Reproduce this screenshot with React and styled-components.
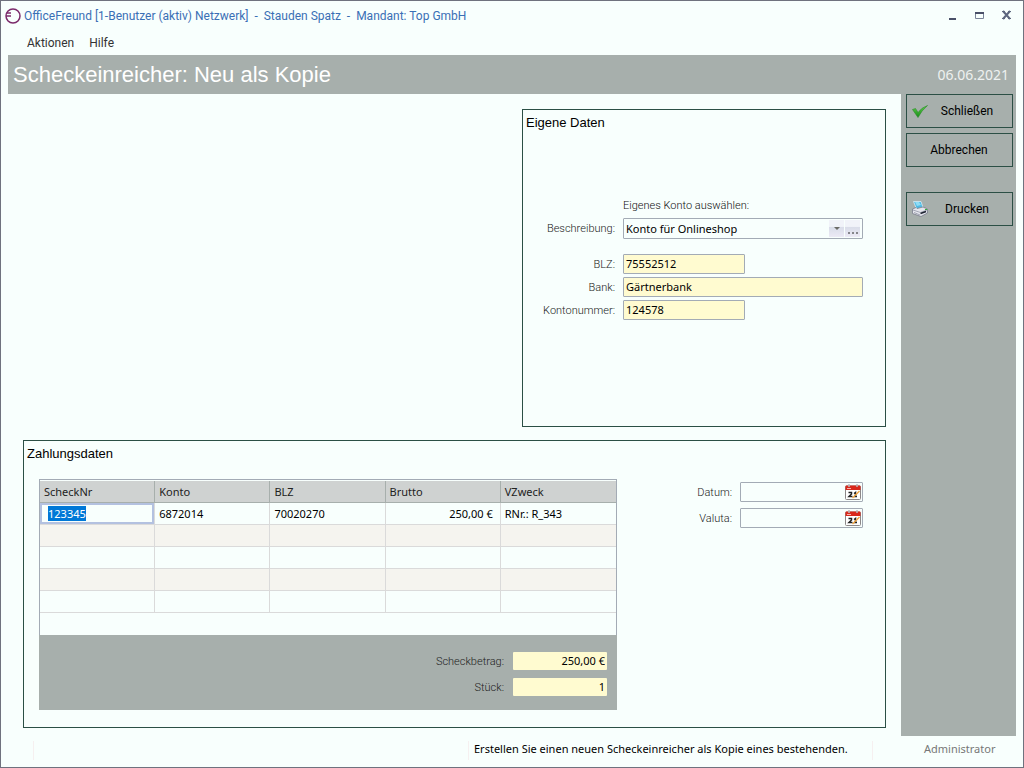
import React, { useEffect, useRef, useState } from "react";
import styled, { createGlobalStyle } from "styled-components";

const ui = `"Noto Sans", sans-serif`;
const plain = `"Liberation Sans", Arial, sans-serif`;
const light = `Roboto, sans-serif`;

const paper = "#f8fffd";
const grey = "#a7afac";
const green = "#2b4f45";
const line = "#a3abb5";
const yellow = "#fffbd0";

const GlobalStyle = createGlobalStyle`
  * {
    box-sizing: border-box;
  }

  body {
    margin: 0;
    background: ${paper};
    color: #000;
    font: 11px/16px ${ui};
  }

  button,
  input,
  select {
    margin: 0;
    font: inherit;
    color: inherit;
  }
`;

const Window = styled.div`
  display: flex;
  flex-direction: column;
  min-height: 100vh;
  border: 1px solid #6f727e;
`;

const TitleBar = styled.header`
  display: flex;
  align-items: center;
  height: 30px;
  padding: 0 9px 0 4px;
`;

const Title = styled.h1`
  flex: 1;
  margin: 0 0 0 3px;
  font: 400 12px/16px ${light};
  white-space: pre;
  color: #3a6fb5;
`;

const WindowButton = styled.button`
  display: flex;
  width: 15px;
  height: 16px;
  margin-left: 12px;
  padding: 2px;
  border: 0;
  background: none;
`;

const MenuBar = styled.nav`
  display: flex;
  gap: 15px;
  height: 24px;
  padding: 3px 26px;
`;

const MenuItem = styled.button`
  padding: 0;
  border: 0;
  background: none;
  font: 400 12px/18px ${light};
  color: #333;
`;

const Banner = styled.div`
  display: flex;
  align-items: center;
  justify-content: space-between;
  height: 39px;
  margin: 0 7px;
  padding: 0 7px 0 5px;
  background: ${grey};
  color: #fff;
`;

const Heading = styled.h2`
  margin: 0;
  font: 400 22px/24px ${plain};
`;

const Today = styled.span`
  font-size: 14px;
  color: #eef1f0;
`;

const Body = styled.div`
  display: flex;
  flex: 1;
  margin: 0 7px;
`;

const Main = styled.main`
  display: flex;
  flex: 1;
  flex-direction: column;
  gap: 13px;
  padding: 15px 15px 8px;
`;

const AccountRow = styled.div`
  display: grid;
  flex: 1;
  grid-template-columns: 499fr 364fr;
`;

const Panel = styled.section`
  grid-column: -2;
  padding: 4px 3px;
  border: 1px solid ${green};
`;

const PanelTitle = styled.h3`
  margin: 0;
  font: 400 13px/18px ${plain};
`;

const AccountForm = styled.form`
  display: grid;
  grid-template-columns: 1fr 240px;
  gap: 3px 8px;
  padding: 65px 19px 0 0;
`;

const Label = styled.label`
  font: 300 11px/22px ${light};
  height: 20px;
  text-align: right;
  color: #222;
`;

const Hint = styled.p`
  grid-column: 2;
  margin: 0;
  font: 300 11px/18px ${light};
  color: #111;
`;

const Field = styled.input`
  width: ${p => p.$width || "100%"};
  height: 20px;
  padding: 0 2px 2px;
  border: 1px solid ${line};
  border-radius: 1px;
  background: ${yellow};
`;

const Picker = styled.div`
  display: flex;
  height: 21px;
  margin-bottom: 12px;
  padding: 1px 2px 1px 1px;
  gap: 1px;
  border: 1px solid ${line};
  border-radius: 1px;
`;

const PickerSelect = styled.select`
  flex: 1;
  padding: 0 1px;
  border: 0;
  appearance: none;
  background: none;
`;

const PickerButton = styled.button`
  display: flex;
  width: 15px;
  padding: 0;
  border: 0;
  background: linear-gradient(#f1f3f9 0 38%, #d9dde9 42%, #eceaf5);
`;

const PaymentRow = styled.div`
  display: grid;
  grid-template-columns: 578fr 246fr;
  padding: 16px 19px 13px 12px;
`;

const Sheet = styled.div`
  border: 1px solid ${line};
  border-bottom: 0;
  padding-top: 1px;
`;

const Table = styled.table`
  width: 100%;
  margin-bottom: 22px;
  border-collapse: separate;
  border-spacing: 0;
  table-layout: fixed;
`;

const HeadCell = styled.th`
  height: 22px;
  padding: 0 4px;
  border-right: 1px solid ${grey};
  border-bottom: 1px solid ${grey};
  background: #cfd2d1;
  font-weight: 400;
  text-align: left;
  color: #222;

  &:last-child {
    border-right: 0;
  }
`;

const Row = styled.tr`
  &:nth-child(even) {
    background: #f5f4ef;
  }
`;

const Cell = styled.td`
  height: 22px;
  padding: ${p => (p.$editing ? "0" : p.$right ? "0 7px" : "0 4px")};
  border-right: 1px solid #dadada;
  border-bottom: 1px solid #dadada;
  text-align: ${p => (p.$right ? "right" : "left")};

  &:last-child {
    border-right: 0;
  }
`;

const CellInput = styled.input`
  display: block;
  width: 100%;
  height: 21px;
  padding: 0 6px;
  border: 2px solid #b3c1e0;
  outline: 0;
  background: ${paper};

  &::selection {
    background: #0078d7;
    color: #fff;
  }
`;

const Summary = styled.div`
  display: grid;
  grid-template-columns: 1fr 94px;
  gap: 8px 9px;
  margin: 0 -1px;
  padding: 17px 10px 14px;
  background: ${grey};

  ${Label} {
    height: 18px;
    line-height: 20px;
  }

  ${Field} {
    height: 18px;
    border: 0;
    text-align: right;
  }
`;

const Dates = styled.div`
  display: grid;
  grid-template-columns: 1fr 123px;
  align-content: start;
  gap: 6px 8px;
  padding-top: 3px;
`;

const DateBox = styled.div`
  display: flex;
  height: 20px;
  border: 1px solid ${line};
  border-radius: 1px;
`;

const DateInput = styled.input`
  flex: 1;
  min-width: 0;
  padding: 0 2px;
  border: 0;
  background: none;
`;

const DateButton = styled.button`
  display: flex;
  padding: 1px;
  border: 0;
  background: none;
`;

const Sidebar = styled.aside`
  display: flex;
  flex-direction: column;
  gap: 5px;
  width: 115px;
  padding: 0 3px 0 5px;
  background: ${grey};
`;

const ActionButton = styled.button`
  display: flex;
  align-items: center;
  height: 34px;
  padding: 0 6px 0 5px;
  border: 1px solid ${green};
  background: none;
  font: 400 12px/16px ${light};

  &:last-child {
    margin-top: 20px;
  }
`;

const ActionText = styled.span`
  flex: 1;
`;

const StatusBar = styled.footer`
  display: grid;
  grid-template-columns: 25px 435fr 404fr 144fr;
  height: 31px;
  padding: 5px 7px 7px;
`;

const StatusCell = styled.span`
  padding-left: ${p => p.$indent || "5px"};
  border-left: 1px solid ${p => (p.$first ? "transparent" : "#f6f0f0")};
  color: ${p => (p.$muted ? "#777" : "#000")};
`;

const LogoIcon = () => (
  <svg width="16" height="16" viewBox="0 0 16 16" fill="none" stroke="#7b2a6b">
    <circle cx="8" cy="8" r="7" strokeWidth="1.5" />
    <path d="M1 8h5M2 5h4" strokeWidth="1.5" />
  </svg>
);

const MinimizeIcon = () => (
  <svg width="11" height="12">
    <path d="M2 9h7" stroke="#4a5068" strokeWidth="2" />
  </svg>
);

const MaximizeIcon = () => (
  <svg width="11" height="12">
    <path d="M1.5 3v5.500h8V3" fill="none" stroke="#7b8499" />
    <path d="M1 3h9" stroke="#4a5068" strokeWidth="2" />
  </svg>
);

const CloseIcon = () => (
  <svg width="11" height="12">
    <path d="M2 1l7 8M9 1l-7 8" stroke="#5d667e" strokeWidth="2" />
    <path d="M1 1.500h3M7 1.500h3M1 8.500h3M7 8.500h3" stroke="#5d667e" />
  </svg>
);

const CheckIcon = () => (
  <svg width="16" height="16" viewBox="0 0 16 16">
    <defs>
      <linearGradient id="check" x2="0" y2="1">
        <stop offset="0" stopColor="#5fd24c" />
        <stop offset="1" stopColor="#168a16" />
      </linearGradient>
    </defs>
    <path
      d="M0.500 6.500L3.500 5.500L6 9.500Q9.500 4.500 15.500 2.500Q9.500 7.500 6 14.500Z"
      fill="url(#check)"
      stroke="#2c8a2a"
      strokeWidth="0.6"
    />
  </svg>
);

const PrinterIcon = () => (
  <svg width="16" height="16" viewBox="0 0 16 16">
    <path d="M1.500 0.500h7.500l2 6L4.500 8z" fill="#4fb9e3" stroke="#e6f4fa" strokeWidth="0.7" />
    <path d="M3 1h4l2 3-4 1z" fill="#8fdcf5" />
    <path d="M0.500 8L4 6.500l1 1 6-1.500 4.500 2v4L9 15.500l-8.500-3z" fill="#e4e5ec" stroke="#787c8c" strokeWidth="0.8" />
    <path d="M1 9l7.500 2.500L15 9" fill="none" stroke="#a4a7b5" />
    <path d="M8.500 12.500l5.500-2" stroke="#1d2230" strokeWidth="1.500" />
    <path d="M2 11.500l6 2.500" stroke="#8f93a2" strokeWidth="0.8" />
    <path d="M13 8.500h2" stroke="#35b53b" strokeWidth="1.200" />
  </svg>
);

const CalendarIcon = () => (
  <svg width="16" height="16" viewBox="0 0 16 16">
    <rect x="0.500" y="2" width="15" height="13.500" rx="1" fill="#fff" stroke="#8c8888" />
    <path d="M0.500 6V2.500q0-1 1-1h13q1 0 1 1V6z" fill="#d9281b" />
    <path d="M2 4.500h4" stroke="#f7b6ae" />
    <path d="M4 0v3M12 0v3" stroke="#b9bcc0" strokeWidth="1.500" />
    <path
      d="M3.500 8.500h3V10L4 12.500h3.500M9 9.500l1.500-1V13M9 12.500h3"
      fill="none"
      stroke="#222"
      strokeWidth="1.500"
    />
    <path d="M7.500 14L14.500 7" stroke="#f0a440" strokeWidth="1.500" />
  </svg>
);

const ArrowIcon = () => (
  <svg width="15" height="17">
    <path d="M5 7h6L8 10z" fill="#6b6b66" />
  </svg>
);

const DotsIcon = () => (
  <svg width="15" height="17">
    <path d="M3 12h2v2H3zM7 12h2v2H7zM11 12h2v2h-2z" fill="#85858a" />
  </svg>
);

const columns = ["ScheckNr", "Konto", "BLZ", "Brutto", "VZweck"];
const emptyRows = [1, 2, 3, 4];

const DateField = ({ id, label }) => (
  <>
    <Label htmlFor={id}>{label}</Label>
    <DateBox>
      <DateInput id={id} type="text" />
      <DateButton type="button" aria-label={`${label} Kalender`}>
        <CalendarIcon />
      </DateButton>
    </DateBox>
  </>
);

const Action = ({ icon, children }) => (
  <ActionButton type="button">
    {icon}
    <ActionText>{children}</ActionText>
  </ActionButton>
);

export default function App() {
  const checkInput = useRef(null);
  const [checkNo, setCheckNo] = useState("123345");

  useEffect(() => {
    checkInput.current.focus();
    checkInput.current.select();
  }, []);

  return (
    <Window>
      <GlobalStyle />
      <TitleBar>
        <LogoIcon />
        <Title>
          {"OfficeFreund [1-Benutzer (aktiv) Netzwerk]  -  Stauden Spatz  -  Mandant: Top GmbH"}
        </Title>
        <WindowButton aria-label="Minimieren"><MinimizeIcon /></WindowButton>
        <WindowButton aria-label="Maximieren"><MaximizeIcon /></WindowButton>
        <WindowButton aria-label="Fenster schließen"><CloseIcon /></WindowButton>
      </TitleBar>
      <MenuBar>
        <MenuItem>Aktionen</MenuItem>
        <MenuItem>Hilfe</MenuItem>
      </MenuBar>
      <Banner>
        <Heading>Scheckeinreicher: Neu als Kopie</Heading>
        <Today>06.06.2021</Today>
      </Banner>
      <Body>
        <Main>
          <AccountRow>
            <Panel>
              <PanelTitle>Eigene Daten</PanelTitle>
              <AccountForm>
                <Hint>Eigenes Konto auswählen:</Hint>
                <Label htmlFor="account">Beschreibung:</Label>
                <Picker>
                  <PickerSelect id="account">
                    <option>Konto für Onlineshop</option>
                  </PickerSelect>
                  <PickerButton type="button" aria-label="Liste öffnen"><ArrowIcon /></PickerButton>
                  <PickerButton type="button" aria-label="Konten bearbeiten"><DotsIcon /></PickerButton>
                </Picker>
                <Label htmlFor="blz">BLZ:</Label>
                <Field id="blz" $width="122px" defaultValue="75552512" />
                <Label htmlFor="bank">Bank:</Label>
                <Field id="bank" defaultValue="Gärtnerbank" />
                <Label htmlFor="number">Kontonummer:</Label>
                <Field id="number" $width="122px" defaultValue="124578" />
              </AccountForm>
            </Panel>
          </AccountRow>
          <Panel>
            <PanelTitle>Zahlungsdaten</PanelTitle>
            <PaymentRow>
              <Sheet>
                <Table>
                  <thead>
                    <tr>
                      {columns.map(name => (
                        <HeadCell key={name}>{name}</HeadCell>
                      ))}
                    </tr>
                  </thead>
                  <tbody>
                    <Row>
                      <Cell $editing>
                        <CellInput
                          ref={checkInput}
                          aria-label="ScheckNr"
                          value={checkNo}
                          onChange={e => setCheckNo(e.target.value)}
                        />
                      </Cell>
                      <Cell>6872014</Cell>
                      <Cell>70020270</Cell>
                      <Cell $right>250,00 €</Cell>
                      <Cell>RNr.: R_343</Cell>
                    </Row>
                    {emptyRows.map(n => (
                      <Row key={n}>
                        {columns.map(name => (
                          <Cell key={name} />
                        ))}
                      </Row>
                    ))}
                  </tbody>
                </Table>
                <Summary>
                  <Label htmlFor="total">Scheckbetrag:</Label>
                  <Field id="total" readOnly value="250,00 €" />
                  <Label htmlFor="count">Stück:</Label>
                  <Field id="count" readOnly value="1" />
                </Summary>
              </Sheet>
              <Dates>
                <DateField id="date" label="Datum:" />
                <DateField id="valuta" label="Valuta:" />
              </Dates>
            </PaymentRow>
          </Panel>
        </Main>
        <Sidebar>
          <Action icon={<CheckIcon />}>Schließen</Action>
          <Action>Abbrechen</Action>
          <Action icon={<PrinterIcon />}>Drucken</Action>
        </Sidebar>
      </Body>
      <StatusBar>
        <StatusCell $first />
        <StatusCell />
        <StatusCell>Erstellen Sie einen neuen Scheckeinreicher als Kopie eines bestehenden.</StatusCell>
        <StatusCell $muted $indent="51px">Administrator</StatusCell>
      </StatusBar>
    </Window>
  );
}
